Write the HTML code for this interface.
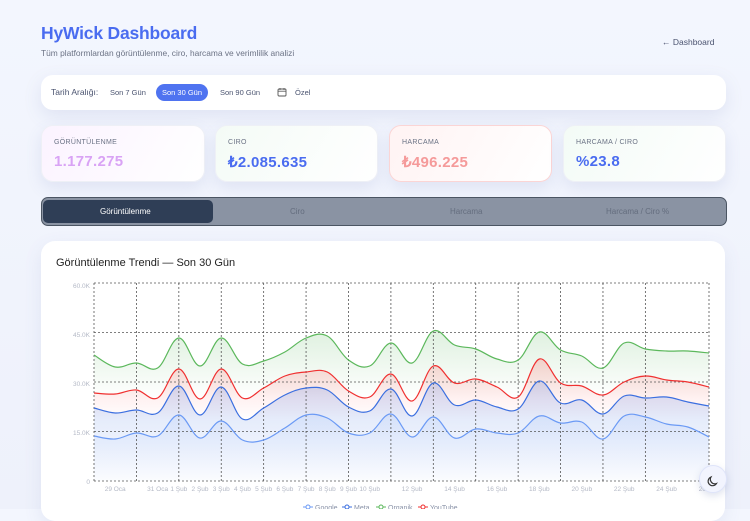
<!DOCTYPE html>
<html><head><meta charset="utf-8">
<style>
*{margin:0;padding:0;box-sizing:border-box}
body{width:750px;height:509px;overflow:hidden;background:linear-gradient(180deg,#f3f6fe 0%,#eef1fb 100%);font-family:"Liberation Sans",sans-serif;position:relative;color:#333}
.abs{position:absolute}
h1{position:absolute;left:41px;top:23px;font-size:17.5px;font-weight:bold;color:#4a6cf0;letter-spacing:-0.2px}
.sub{left:41px;top:48px;font-size:8.4px;color:#6b7385}
.back{left:662px;top:37px;font-size:8.5px;color:#4b5470}
.bar{left:41px;top:75px;width:685px;height:35px;background:#fff;border-radius:12px;box-shadow:0 6px 18px rgba(90,110,170,.13)}
.bar span{position:absolute;top:13px;font-size:7.5px;color:#4b5470}
.pill{left:115px;top:9px;width:52px;height:17px;border-radius:9px;background:#4f73f0;color:#fff !important;text-align:center;line-height:17px;top:9px !important}
.card{top:125px;height:57px;border-radius:12px;box-shadow:0 6px 16px rgba(90,110,170,.12);border:1px solid #eef0f6}
.card .l{position:absolute;left:12px;top:13px;font-size:7px;color:#6b7385;letter-spacing:.3px}
.card .v{position:absolute;left:12px;top:27px;font-size:15px;font-weight:bold;letter-spacing:.3px}
.tabs{left:41px;top:197px;width:686px;height:29px;background:#8a93a3;border:1.5px solid #4b5563;border-radius:7px}
.tabs span{position:absolute;top:9px;font-size:8px;color:#646d7e}
.act{left:1px;top:1.5px;width:170px;height:23px;background:#2f3e56;border-radius:5px}
.chart{left:41px;top:241px;width:684px;height:280px;background:#fff;border-radius:14px;box-shadow:0 6px 18px rgba(90,110,170,.1)}
.ct{left:56px;top:257px;font-size:11px;color:#222}
.moon{left:699px;top:465px;width:28px;height:28px;border-radius:50%;background:#f2f4fe;border:1px solid #dfe4fa;box-shadow:0 3px 8px rgba(90,110,170,.2)}
</style></head><body>
<h1>HyWick Dashboard</h1>
<div class="abs sub">Tüm platformlardan görüntülenme, ciro, harcama ve verimlilik analizi</div>
<div class="abs back">← Dashboard</div>
<div class="abs bar">
<span style="left:10px;top:12px;font-size:8.5px">Tarih Aralığı:</span>
<span style="left:69px">Son 7 Gün</span>
<span class="pill">Son 30 Gün</span>
<span style="left:179px">Son 90 Gün</span>
<svg class="abs" style="left:236px;top:12px" width="10" height="10" viewBox="0 0 10 10"><rect x="1" y="2" width="8" height="7" rx="1" fill="none" stroke="#555" stroke-width=".9"/><line x1="1" y1="4.2" x2="9" y2="4.2" stroke="#555" stroke-width=".8"/><line x1="3" y1="1" x2="3" y2="3" stroke="#555" stroke-width=".8"/><line x1="7" y1="1" x2="7" y2="3" stroke="#555" stroke-width=".8"/></svg>
<span style="left:254px">Özel</span>
</div>
<div class="abs card" style="left:41px;width:164px;background:linear-gradient(120deg,#fbf3ff,#fff)"><div class="l">GÖRÜNTÜLENME</div><div class="v" style="color:#d9a3f5">1.177.275</div></div>
<div class="abs card" style="left:215px;width:163px;background:linear-gradient(120deg,#f4fbf6,#fff)"><div class="l">CIRO</div><div class="v" style="color:#4a6cf0">₺2.085.635</div></div>
<div class="abs card" style="left:389px;width:163px;background:linear-gradient(120deg,#fff3f3,#fff);border-color:#fbd5d5"><div class="l">HARCAMA</div><div class="v" style="color:#f59a9a">₺496.225</div></div>
<div class="abs card" style="left:563px;width:163px;background:linear-gradient(120deg,#f3fbf6,#fff)"><div class="l">HARCAMA / CIRO</div><div class="v" style="color:#4a6cf0">%23.8</div></div>
<div class="abs tabs"><div class="abs act"></div>
<span style="left:58px;color:#fff">Görüntülenme</span>
<span style="left:248px">Ciro</span>
<span style="left:408px">Harcama</span>
<span style="left:564px">Harcama / Ciro %</span></div>
<div class="abs chart"></div>
<div class="abs ct">Görüntülenme Trendi — Son 30 Gün</div>
<svg id="c" class="abs" style="left:0;top:0" width="750" height="509" font-family="Liberation Sans, sans-serif">
<defs>
<linearGradient id="gg" x1="0" y1="0" x2="0" y2="1"><stop offset="0" stop-color="#4caf50" stop-opacity=".18"/><stop offset=".45" stop-color="#4caf50" stop-opacity="0"/></linearGradient>
<linearGradient id="gr" x1="0" y1="0" x2="0" y2="1"><stop offset="0" stop-color="#ff3b3b" stop-opacity=".2"/><stop offset=".5" stop-color="#ff3b3b" stop-opacity="0"/></linearGradient>
<linearGradient id="gm" x1="0" y1="0" x2="0" y2="1"><stop offset="0" stop-color="#3b6fe0" stop-opacity=".2"/><stop offset="1" stop-color="#3b6fe0" stop-opacity=".02"/></linearGradient>
<linearGradient id="gl" x1="0" y1="0" x2="0" y2="1"><stop offset="0" stop-color="#6b9af5" stop-opacity=".12"/><stop offset="1" stop-color="#6b9af5" stop-opacity="0"/></linearGradient>
</defs>
<g id="areas"></g>
<g id="grid" stroke="#555" stroke-width=".8" stroke-dasharray="2,2" fill="none"></g>
<g id="lines" fill="none" stroke-width="1.2"></g>
<g font-size="6.5" fill="#b4b9c6" text-anchor="end">
<text x="90" y="288">60.0K</text><text x="90" y="337">45.0K</text><text x="90" y="386">30.0K</text><text x="90" y="435">15.0K</text><text x="90" y="484">0</text></g>
<g id="xl" font-size="6.5" fill="#b4b9c6" text-anchor="middle"></g>
<g font-size="7" fill="#8a93a8">
<line x1="303" y1="507" x2="313" y2="507" stroke="#6b9af5"/><circle cx="308" cy="507" r="2" fill="#fff" stroke="#6b9af5"/><text x="315" y="510">Google</text>
<line x1="342" y1="507" x2="352" y2="507" stroke="#3b6fe0"/><circle cx="347" cy="507" r="2" fill="#fff" stroke="#3b6fe0"/><text x="354" y="510">Meta</text>
<line x1="376" y1="507" x2="386" y2="507" stroke="#5cb85c"/><circle cx="381" cy="507" r="2" fill="#fff" stroke="#5cb85c"/><text x="388" y="510">Organik</text>
<line x1="418" y1="507" x2="428" y2="507" stroke="#f03030"/><circle cx="423" cy="507" r="2" fill="#fff" stroke="#f03030"/><text x="430" y="510">YouTube</text>
</g>
</svg>
<div class="abs moon"><svg width="28" height="28" viewBox="0 0 28 28"><path d="M16.5 17.5A4.5 4.5 0 0 1 11 11a4.5 4.5 0 1 0 5.5 6.5z" fill="none" stroke="#333" stroke-width="1.2"/></svg></div>
<script>
var G=[355,367,363,368,338,366,338,364,361,352,338,336,360,366,343,363,331,345,349,359,360,332,350,356,368,343,349,351,351,353];
var R=[393,394,390,398,369,399,369,398,388,376,372,372,391,397,374,401,366,383,379,387,397,359,383,386,395,382,376,380,382,387];
var M=[408,413,410,413,386,415,387,419,408,395,388,390,407,411,389,416,383,405,400,407,409,381,403,400,414,396,398,397,402,406];
var L=[436,439,433,436,415,438,421,440,440,428,415,418,433,433,414,437,417,438,429,433,433,416,423,422,439,416,417,424,427,437];
var x0=94,dx=615/29,ns="http://www.w3.org/2000/svg";
function path(a){var p=[];for(var i=0;i<a.length;i++)p.push([x0+i*dx,a[i]]);
var d="M"+p[0][0]+","+p[0][1];
for(var i=0;i<p.length-1;i++){var p0=p[Math.max(0,i-1)],p1=p[i],p2=p[i+1],p3=p[Math.min(p.length-1,i+2)];var t=0.18;
d+=" C"+(p1[0]+(p2[0]-p0[0])*t)+","+(p1[1]+(p2[1]-p0[1])*t)+" "+(p2[0]-(p3[0]-p1[0])*t)+","+(p2[1]-(p3[1]-p1[1])*t)+" "+p2[0]+","+p2[1];}
return d;}
function el(g,n,at){var e=document.createElementNS(ns,n);for(var k in at)e.setAttribute(k,at[k]);document.getElementById(g).appendChild(e);}
[[G,"gg","#5cb85c"],[R,"gr","#f03030"],[M,"gm","#3b6fe0"],[L,"gl","#6b9af5"]].forEach(function(s){
var d=path(s[0]);el("areas","path",{d:d+" L709,481 L94,481 Z",fill:"url(#"+s[1]+")"});el("lines","path",{d:d,stroke:s[2]});});
[283,332.5,382,431.5,481].forEach(function(y){el("grid","line",{x1:94,x2:709,y1:y,y2:y});});
for(var i=0;i<=26;i+=2){var x=x0+i*dx;el("grid","line",{x1:x,x2:x,y1:283,y2:481});}
el("grid","line",{x1:709,x2:709,y1:283,y2:481});
var lab=[[1,"29 Oca"],[3,"31 Oca"],[4,"1 Şub"],[5,"2 Şub"],[6,"3 Şub"],[7,"4 Şub"],[8,"5 Şub"],[9,"6 Şub"],[10,"7 Şub"],[11,"8 Şub"],[12,"9 Şub"],[13,"10 Şub"],[15,"12 Şub"],[17,"14 Şub"],[19,"16 Şub"],[21,"18 Şub"],[23,"20 Şub"],[25,"22 Şub"],[27,"24 Şub"],[29,"26 Şub"]];
lab.forEach(function(l){var t=document.createElementNS(ns,"text");t.setAttribute("x",x0+l[0]*dx);t.setAttribute("y",491);t.textContent=l[1];document.getElementById("xl").appendChild(t);});
</script>
</body></html>
